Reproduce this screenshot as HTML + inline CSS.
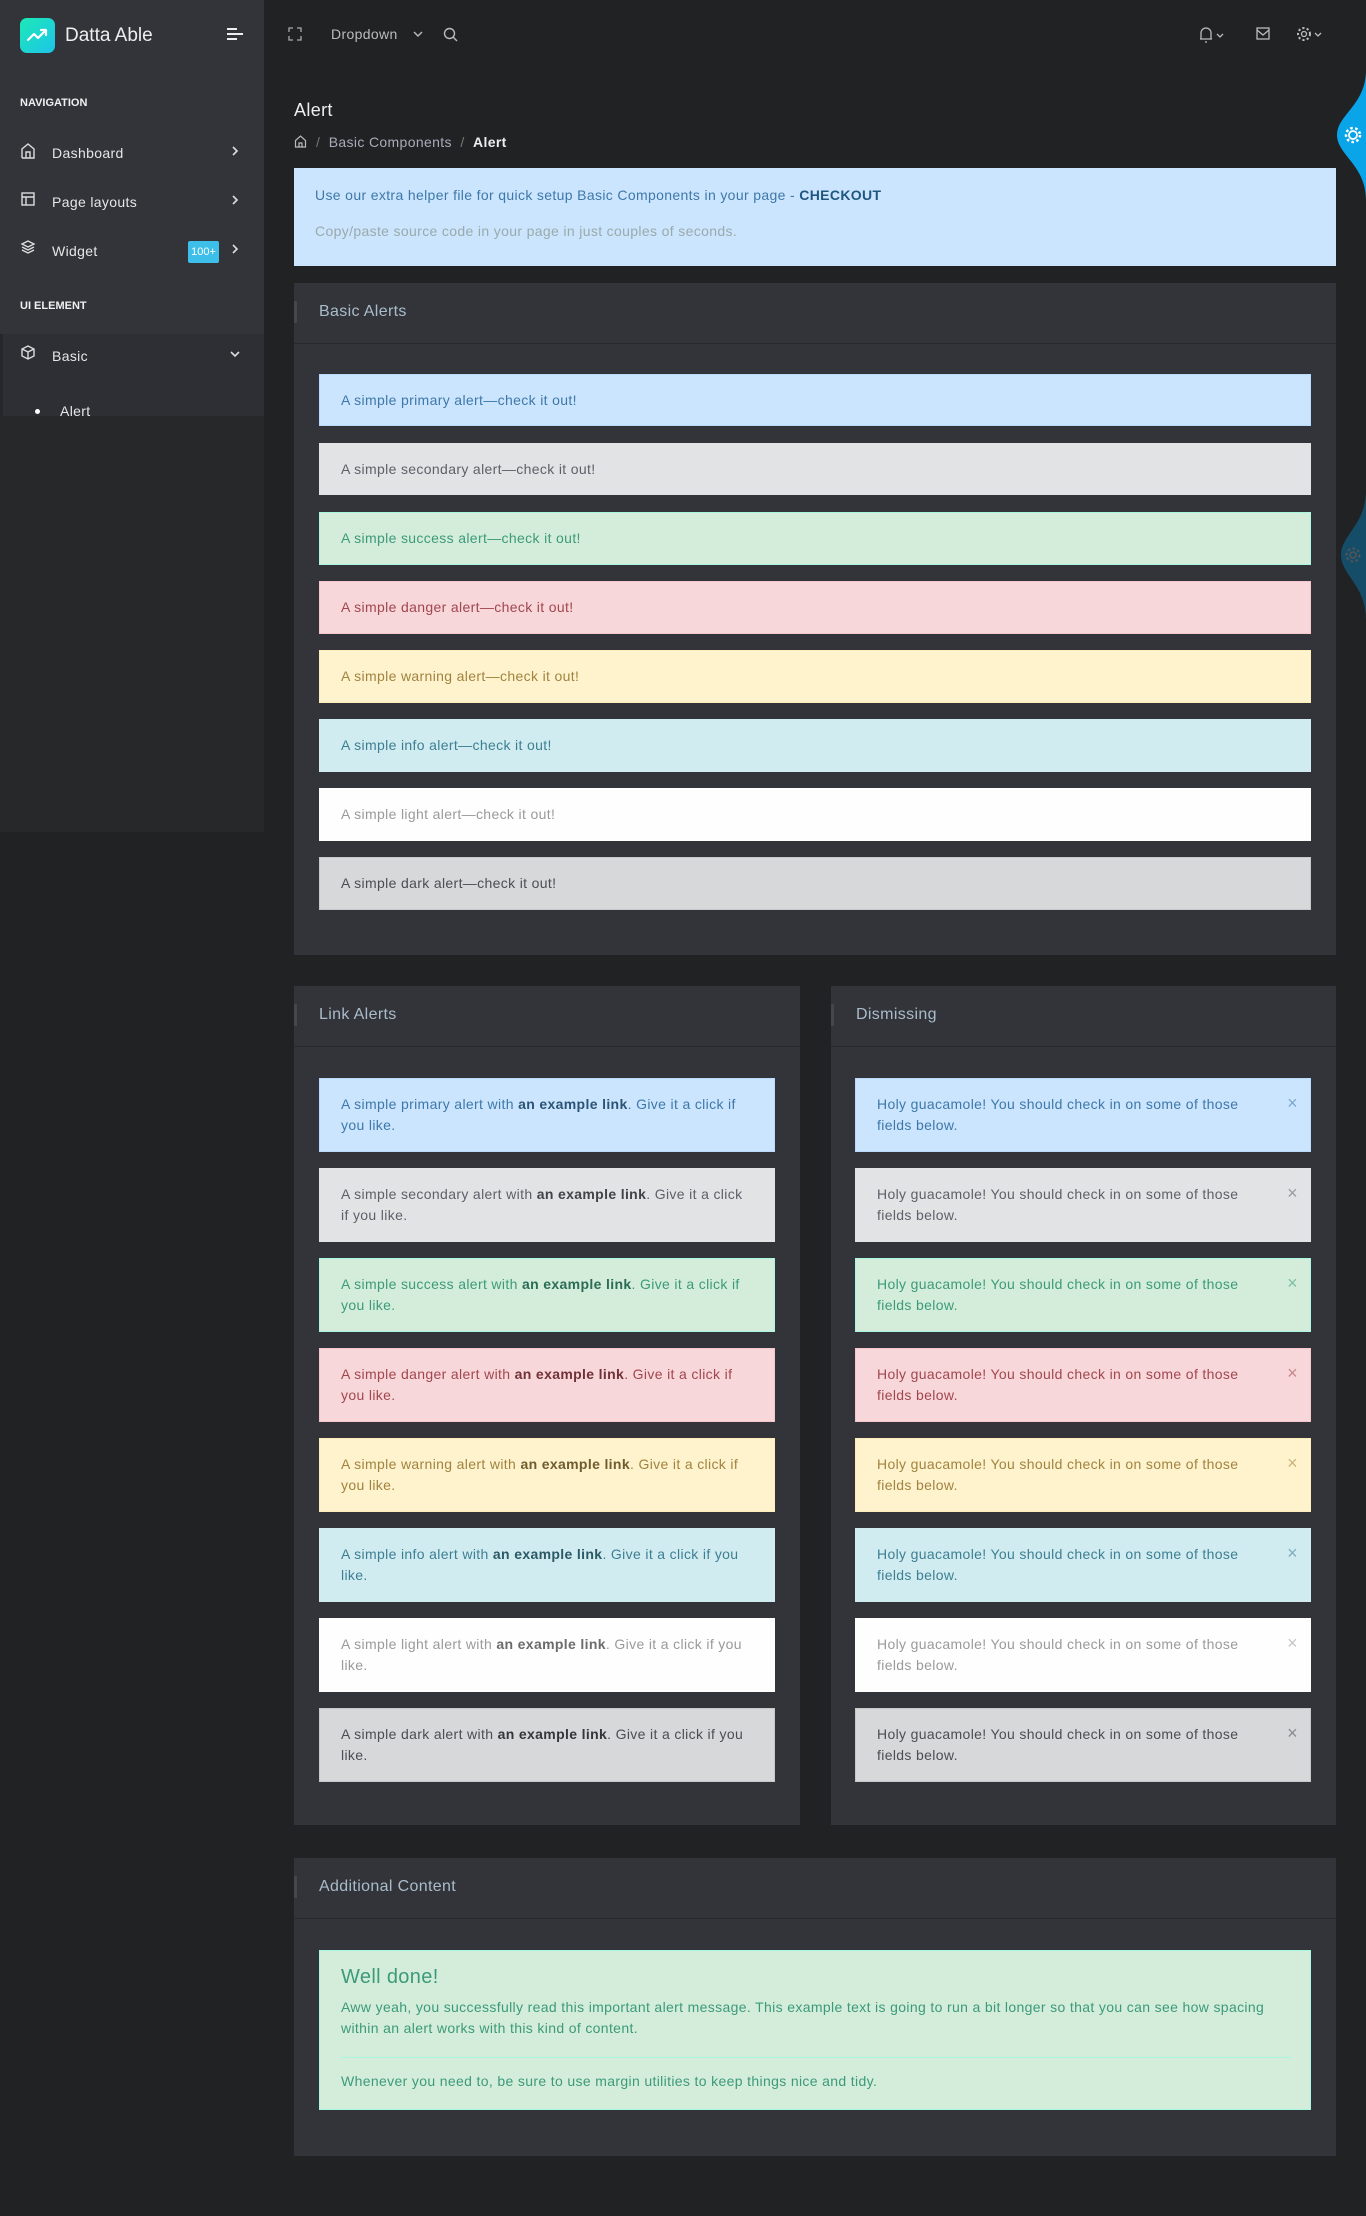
<!DOCTYPE html>
<html><head><meta charset="utf-8"><style>
*{box-sizing:border-box;margin:0;padding:0}
body{width:1366px;height:2216px;background:#212224;font-family:"Liberation Sans",sans-serif;position:relative;overflow:hidden;color:#ccc;letter-spacing:.35px}
.abs{position:absolute}
.sb{left:0;top:0;width:264px;height:832px;background:#27282a}
.sbtop{left:0;top:0;width:264px;height:416px;background:#33343a}
.basic{left:0;top:334px;width:264px;height:82px;background:#2e2f34;border-left:3px solid #26272b}
.nav{font-size:14px;color:#e6e6e6}
.cap{font-size:11px;font-weight:bold;color:#f0f0f0;letter-spacing:0}
.card{background:#333439}
.ch{border-bottom:1px solid #27282b}
.ch span{position:absolute;left:0;top:18px;width:3px;height:22px;background:#46474c}
.ct{font-size:16px;color:#a9bccb;position:absolute;left:25px;top:20px}
.al{position:absolute;font-size:14px;line-height:21px;padding:0 21px;display:flex;align-items:center;border:1px solid transparent}
.p{background:#cce5fe;color:#3e78a8;border-color:#b8daff}
.s{background:#e2e3e5;color:#5c6168}
.g{background:#d4edda;color:#3c9a7a;border-color:#a8f5e0}
.d{background:#f8d7da;color:#a0474e;border-color:#f5c6cb}
.w{background:#fff3cd;color:#a08340;border-color:#ffeeba}
.i{background:#d1ecf1;color:#3d7f92}
.l{background:#fefefe;color:#9a9a9a}
.k{background:#d6d8d9;color:#4a4e52;border-color:#c6c8ca}
.al b{font-weight:bold;filter:brightness(.7)}
.x{position:absolute;right:12px;top:14px;font-size:18px;opacity:.55}
</style></head><body>
<div class="abs sb"></div><div class="abs sbtop"></div><div class="abs basic"></div>
<div class="abs" style="left:20px;top:18px;width:35px;height:35px;border-radius:7px;background:linear-gradient(135deg,#1de9b6,#1dc4e9)"><svg width="35" height="35" viewBox="0 0 35 35"><path d="M8 22l6-6 4 4 8-8M21 12h5v5" stroke="#fff" stroke-width="2.2" fill="none" stroke-linecap="round" stroke-linejoin="round"/></svg></div>
<div class="abs" style="left:65px;top:25px;font-size:19px;color:#eee;letter-spacing:0">Datta Able</div>
<svg class="abs" style="left:226px;top:27px" width="18" height="14"><path d="M1 2h10M1 7h16M1 12h10" stroke="#eee" stroke-width="2"/></svg>
<svg class="abs" style="left:288px;top:27px" width="14" height="14"><path d="M1 5V1h4M9 1h4v4M13 9v4H9M5 13H1V9" stroke="#aaa" stroke-width="1.3" fill="none"/></svg>
<div class="abs" style="left:331px;top:26px;font-size:14px;color:#bbb">Dropdown</div>
<svg class="abs" style="left:413px;top:31px" width="10" height="7"><path d="M1 1l4 4 4-4" stroke="#bbb" stroke-width="1.4" fill="none"/></svg>
<svg class="abs" style="left:443px;top:27px" width="15" height="15"><circle cx="6.5" cy="6.5" r="5" stroke="#bbb" stroke-width="1.4" fill="none"/><path d="M10 10l4 4" stroke="#bbb" stroke-width="1.4"/></svg>
<svg class="abs" style="left:1198px;top:26px" width="30" height="18"><path d="M3 13V7a5 5 0 0110 0v6H2h12M7 16h2" stroke="#bbb" stroke-width="1.3" fill="none"/><path d="M19 8l3 3 3-3" stroke="#bbb" stroke-width="1.3" fill="none"/></svg>
<svg class="abs" style="left:1256px;top:27px" width="14" height="13"><rect x="1" y="1" width="12" height="11" stroke="#bbb" stroke-width="1.3" fill="none"/><path d="M1 3l6 5 6-5" stroke="#bbb" stroke-width="1.3" fill="none"/></svg>
<svg class="abs" style="left:1296px;top:25px" width="30" height="18"><circle cx="8" cy="9" r="2.5" stroke="#bbb" stroke-width="1.3" fill="none"/><circle cx="8" cy="9" r="6" stroke="#bbb" stroke-width="2" stroke-dasharray="2.2 2.2" fill="none"/><path d="M19 8l3 3 3-3" stroke="#bbb" stroke-width="1.3" fill="none"/></svg>
<div class="abs cap" style="left:20px;top:97px">NAVIGATION</div>
<div class="abs nav" style="left:52px;top:145px">Dashboard</div>
<div class="abs nav" style="left:52px;top:194px">Page layouts</div>
<div class="abs nav" style="left:52px;top:243px">Widget</div>
<div class="abs" style="left:188px;top:241px;width:31px;height:22px;background:#3ebfea;color:#fff;font-size:11px;line-height:22px;text-align:center;border-radius:2px;letter-spacing:0">100+</div>
<div class="abs cap" style="left:20px;top:300px">UI ELEMENT</div>
<div class="abs nav" style="left:52px;top:348px">Basic</div>
<div class="abs nav" style="left:60px;top:403px">Alert</div>
<div class="abs" style="left:35px;top:409px;width:5px;height:5px;border-radius:50%;background:#fff"></div>
<svg class="abs" style="left:20px;top:143px" width="16" height="240" fill="none" stroke="#ddd" stroke-width="1.4"><path d="M2 15V6l6-5 6 5v9H2M6 15v-6h4v6"/><rect x="2" y="50" width="12" height="12"/><path d="M2 54h12M6 54v8"/><path d="M8 98l6 3-6 3-6-3zM2 104l6 3 6-3M2 107l6 3 6-3"/><path d="M8 203l6 3v7l-6 3-6-3v-7zM2 206l6 3 6-3M8 209v7"/></svg>
<svg class="abs" style="left:231px;top:146px" width="8" height="112" fill="none" stroke="#ddd" stroke-width="1.6"><path d="M2 1l4 4-4 4M2 50l4 4-4 4M2 99l4 4-4 4"/></svg>
<svg class="abs" style="left:230px;top:351px" width="10" height="8"><path d="M1 1l4 4 4-4" stroke="#ddd" stroke-width="1.6" fill="none"/></svg>
<div class="abs" style="left:294px;top:100px;font-size:18px;color:#eee">Alert</div>
<svg class="abs" style="left:294px;top:135px" width="13" height="13"><path d="M1.5 12V5.5L6.5 1l5 4.5V12zM5 12V8h3v4" stroke="#bbb" stroke-width="1.2" fill="none"/></svg>
<div class="abs" style="left:316px;top:134px;font-size:14px;color:#aab"><span style="color:#777">/</span>&nbsp; Basic Components &nbsp;<span style="color:#777">/</span>&nbsp; <b style="color:#eee">Alert</b></div>
<div class="abs" style="left:294px;top:168px;width:1042px;height:98px;background:#cce5fe"></div>
<div class="abs" style="left:315px;top:187px;font-size:14px;color:#3e78a8">Use our extra helper file for quick setup Basic Components in your page - <b style="color:#1f5680">CHECKOUT</b></div>
<div class="abs" style="left:315px;top:223px;font-size:14px;color:#9aa">Copy/paste source code in your page in just couples of seconds.</div>
<svg class="abs" style="left:1325px;top:70px" width="41" height="130"><path d="M41 0C41 35 12 45 12 65s29 30 29 65z" fill="#0aa5e8"/><circle cx="28" cy="65" r="4" stroke="#fff" stroke-width="1.8" fill="none"/><circle cx="28" cy="65" r="7" stroke="#fff" stroke-width="2.5" stroke-dasharray="2.5 2.5" fill="none"/></svg>
<svg class="abs" style="left:1335px;top:490px" width="31" height="130"><path d="M31 0C31 35 6 45 6 65s25 30 25 65z" fill="#154d68"/><circle cx="18" cy="65" r="3" stroke="#555" stroke-width="1.5" fill="none"/><circle cx="18" cy="65" r="6.5" stroke="#555" stroke-width="2" stroke-dasharray="2.5 2.5" fill="none"/></svg>
<div class="abs card" style="left:294px;top:283px;width:1042px;height:672px"><div class="abs ch" style="left:0;top:0;width:1042px;height:61px"><span></span><div class="ct">Basic Alerts</div></div></div>
<div class="al p" style="left:319px;top:374px;width:992px;height:52px">A simple primary alert—check it out!</div>
<div class="al s" style="left:319px;top:443px;width:992px;height:52px">A simple secondary alert—check it out!</div>
<div class="al g" style="left:319px;top:512px;width:992px;height:53px">A simple success alert—check it out!</div>
<div class="al d" style="left:319px;top:581px;width:992px;height:53px">A simple danger alert—check it out!</div>
<div class="al w" style="left:319px;top:650px;width:992px;height:53px">A simple warning alert—check it out!</div>
<div class="al i" style="left:319px;top:719px;width:992px;height:53px">A simple info alert—check it out!</div>
<div class="al l" style="left:319px;top:788px;width:992px;height:53px">A simple light alert—check it out!</div>
<div class="al k" style="left:319px;top:857px;width:992px;height:53px">A simple dark alert—check it out!</div>
<div class="abs card" style="left:294px;top:986px;width:506px;height:839px"><div class="abs ch" style="left:0;top:0;width:506px;height:61px"><span></span><div class="ct">Link Alerts</div></div></div>
<div class="abs card" style="left:831px;top:986px;width:505px;height:839px"><div class="abs ch" style="left:0;top:0;width:505px;height:61px"><span></span><div class="ct">Dismissing</div></div></div>
<div class="al p" style="left:319px;top:1078px;width:456px;height:74px"><div>A simple primary alert with <b>an example link</b>. Give it a click if you like.</div></div>
<div class="al s" style="left:319px;top:1168px;width:456px;height:74px"><div>A simple secondary alert with <b>an example link</b>. Give it a click if you like.</div></div>
<div class="al g" style="left:319px;top:1258px;width:456px;height:74px"><div>A simple success alert with <b>an example link</b>. Give it a click if you like.</div></div>
<div class="al d" style="left:319px;top:1348px;width:456px;height:74px"><div>A simple danger alert with <b>an example link</b>. Give it a click if you like.</div></div>
<div class="al w" style="left:319px;top:1438px;width:456px;height:74px"><div>A simple warning alert with <b>an example link</b>. Give it a click if you like.</div></div>
<div class="al i" style="left:319px;top:1528px;width:456px;height:74px"><div>A simple info alert with <b>an example link</b>. Give it a click if you like.</div></div>
<div class="al l" style="left:319px;top:1618px;width:456px;height:74px"><div>A simple light alert with <b>an example link</b>. Give it a click if you like.</div></div>
<div class="al k" style="left:319px;top:1708px;width:456px;height:74px"><div>A simple dark alert with <b>an example link</b>. Give it a click if you like.</div></div>
<div class="al p" style="left:855px;top:1078px;width:456px;height:74px;padding-right:60px"><div>Holy guacamole! You should check in on some of those fields below.</div><span class="x">×</span></div>
<div class="al s" style="left:855px;top:1168px;width:456px;height:74px;padding-right:60px"><div>Holy guacamole! You should check in on some of those fields below.</div><span class="x">×</span></div>
<div class="al g" style="left:855px;top:1258px;width:456px;height:74px;padding-right:60px"><div>Holy guacamole! You should check in on some of those fields below.</div><span class="x">×</span></div>
<div class="al d" style="left:855px;top:1348px;width:456px;height:74px;padding-right:60px"><div>Holy guacamole! You should check in on some of those fields below.</div><span class="x">×</span></div>
<div class="al w" style="left:855px;top:1438px;width:456px;height:74px;padding-right:60px"><div>Holy guacamole! You should check in on some of those fields below.</div><span class="x">×</span></div>
<div class="al i" style="left:855px;top:1528px;width:456px;height:74px;padding-right:60px"><div>Holy guacamole! You should check in on some of those fields below.</div><span class="x">×</span></div>
<div class="al l" style="left:855px;top:1618px;width:456px;height:74px;padding-right:60px"><div>Holy guacamole! You should check in on some of those fields below.</div><span class="x">×</span></div>
<div class="al k" style="left:855px;top:1708px;width:456px;height:74px;padding-right:60px"><div>Holy guacamole! You should check in on some of those fields below.</div><span class="x">×</span></div>
<div class="abs card" style="left:294px;top:1858px;width:1042px;height:298px"><div class="abs ch" style="left:0;top:0;width:1042px;height:61px"><span></span><div class="ct">Additional Content</div></div></div>
<div class="abs g" style="left:319px;top:1950px;width:992px;height:160px;border:1px solid #a8f5e0">
<div class="abs" style="left:21px;top:15px;font-size:20px">Well done!</div>
<div class="abs" style="left:21px;top:46px;width:950px;font-size:14px;line-height:21px">Aww yeah, you successfully read this important alert message. This example text is going to run a bit longer so that you can see how spacing within an alert works with this kind of content.</div>
<div class="abs" style="left:21px;top:106px;width:950px;border-top:1px solid #a8f5e0"></div>
<div class="abs" style="left:21px;top:122px;font-size:14px">Whenever you need to, be sure to use margin utilities to keep things nice and tidy.</div>
</div>
</body></html>
